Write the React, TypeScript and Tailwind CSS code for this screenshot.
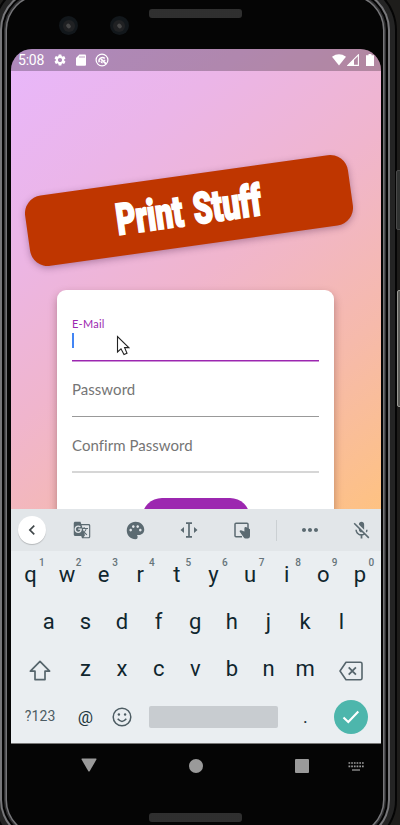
import React from "react";
import {
  MdSettings,
  MdGTranslate,
  MdPalette,
  MdMicOff,
  MdMoreHoriz,
  MdChevronLeft,
} from "react-icons/md";

const row1 = ["q", "w", "e", "r", "t", "y", "u", "i", "o", "p"];
const row2 = ["a", "s", "d", "f", "g", "h", "j", "k", "l"];
const row3 = ["z", "x", "c", "v", "b", "n", "m"];

function Speaker() {
  return (
    <div className="h-[9px] w-[93px] rounded-[3px] bg-[#181818] bg-[radial-gradient(#303030_0.7px,transparent_0.9px)] bg-[size:2px_2px]" />
  );
}

function Camera() {
  return (
    <div className="flex h-[19px] w-[19px] items-center justify-center rounded-full bg-[#12171b]">
      <div className="flex h-[12px] w-[12px] items-center justify-center rounded-full bg-[#202123]">
        <div className="h-[4px] w-[5px] rotate-45 rounded-full bg-[#484848]" />
      </div>
    </div>
  );
}

function StatusBar() {
  return (
    <div className="flex h-[22px] shrink-0 items-center bg-black/25 pl-[7px] pr-[7px] text-white">
      <span className="w-[35px] text-[14px] leading-[22px] tracking-[-0.2px]">5:08</span>
      <MdSettings className="h-[14px] w-[14px]" />
      <svg className="ml-[9px] h-[12px] w-[10px]" viewBox="0 0 10 12">
        <path d="M3.4 0.5H9Q10 .5 10 1.5V10.8Q10 11.8 9 11.8H1Q0 11.8 0 10.8V4Z" fill="currentColor" />
        <path d="M4 2v2M6 2v2M8 2v2" stroke="#ae87b5" strokeWidth=".8" />
      </svg>
      <svg className="ml-[9px] h-[14px] w-[14px]" viewBox="0 0 14 14" fill="none" stroke="currentColor">
        <circle cx="7" cy="7" r="5.9" strokeWidth="1.2" />
        <path d="M4.2 9.2A3.5 3.5 0 0 1 9.8 5.4" strokeWidth="1.5" />
        <path d="M6 6.2L11.3 11" strokeWidth="1.7" />
        <path d="M10.2 7Q9.8 7.6 8.6 7.3M7.6 9.9Q5.8 9.6 6 8" strokeWidth="1.1" />
      </svg>
      <div className="flex-1" />
      <svg className="h-[12px] w-[14px]" viewBox="0 0 14 12">
        <path d="M0 2.7Q7-2 14 2.7L7 11.5Z" fill="currentColor" />
      </svg>
      <svg className="ml-[1.5px] h-[12px] w-[12px]" viewBox="0 0 12 12">
        <path d="M11.4 .8V11.4H.8Z" fill="none" stroke="currentColor" strokeWidth="1.1" />
        <path d="M7 5V11.4H1Z" fill="currentColor" />
      </svg>
      <svg className="ml-[7px] h-[12px] w-[8px]" viewBox="0 0 8 12">
        <path d="M2.5 0H5.5V1.2H8V12H0V1.2H2.5Z" fill="currentColor" />
      </svg>
    </div>
  );
}

function Key({ label }: { label: string }) {
  return (
    <div className="flex w-[36.6px] shrink-0 items-center justify-center text-[22px] leading-none text-[#10262e]">
      {label}
    </div>
  );
}

function Keyboard() {
  return (
    <div className="flex h-[234px] shrink-0 flex-col bg-[#eaeef1]">
      <div className="flex h-[42px] shrink-0 items-center bg-[#e2e6e9] text-[#5b6a71]">
        <div className="flex w-[44.5px] justify-center pr-[2px]">
          <div className="flex h-[28px] w-[28px] items-center justify-center rounded-full bg-white text-[#40474a] shadow-[0_1px_1px_rgba(0,0,0,0.2)]">
            <MdChevronLeft className="h-[20px] w-[20px]" />
          </div>
        </div>
        <div className="flex w-[53.5px] justify-center">
          <MdGTranslate className="h-[18px] w-[18px]" />
        </div>
        <div className="flex w-[53.5px] justify-center">
          <MdPalette className="h-[21px] w-[21px]" />
        </div>
        <div className="flex w-[53.5px] justify-center">
          <svg className="h-[16px] w-[18px]" viewBox="0 0 18 16">
            <path d="M6 1.2H12M6 14.8H12M9 1V15" fill="none" stroke="currentColor" strokeWidth="1.7" />
            <path d="M4 5V11L.5 8ZM14 5V11L17.5 8Z" fill="currentColor" />
          </svg>
        </div>
        <div className="flex w-[53.5px] justify-center">
          <svg className="h-[17px] w-[17px]" viewBox="0 0 17 17">
            <path d="M8 14.7H2Q1 14.7 1 13.7V2.3Q1 1.3 2 1.3H13Q14 1.3 14 2.3V7" fill="none" stroke="currentColor" strokeWidth="1.5" />
            <path d="M5.6 9.6Q5.6 8.2 7 8.3L10.4 9.4V6Q10.6 4.8 12 5L16 7.2V14.2Q15.8 16.4 13.8 16.4H11.6Q10.4 16.4 9.6 15.2Z" fill="currentColor" />
          </svg>
        </div>
        <div className="ml-[6.5px] h-[21px] w-px bg-[#cbd0d3]" />
        <div className="flex w-[66px] justify-center">
          <MdMoreHoriz className="h-[24px] w-[24px]" />
        </div>
        <div className="flex w-[37px] justify-center">
          <MdMicOff className="h-[21px] w-[21px]" />
        </div>
      </div>
      <div className="flex h-[47.3px] pl-[1.2px]">
        {row1.map((k, i) => (
          <div key={k} className="relative flex">
            <Key label={k} />
            <span className="absolute right-[4px] top-[7px] text-[10px] font-medium leading-[10px] text-[#66747a]">{(i + 1) % 10}</span>
          </div>
        ))}
      </div>
      <div className="flex h-[47.3px] pl-[19.5px]">
        {row2.map((k) => (
          <Key key={k} label={k} />
        ))}
      </div>
      <div className="flex h-[47.3px]">
        <div className="flex w-[56.2px] items-center justify-center pl-[1px] pt-[2px] text-[#56656c]">
          <svg className="h-[21px] w-[22px]" viewBox="0 0 22 21">
            <path d="M11 1.3L20.6 11.2H16V19.6H6V11.2H1.4Z" fill="none" stroke="currentColor" strokeWidth="1.7" strokeLinejoin="round" />
          </svg>
        </div>
        {row3.map((k) => (
          <Key key={k} label={k} />
        ))}
        <div className="flex flex-1 items-center justify-center pr-[2px] pt-[3px] text-[#56656c]">
          <svg className="h-[20px] w-[24px]" viewBox="0 0 24 20" fill="none" stroke="currentColor" strokeWidth="1.6">
            <path d="M7 1.2H21.4Q23 1.2 23 2.8V17.2Q23 18.8 21.4 18.8H7L1 10Z" strokeLinejoin="round" />
            <path d="M9.7 6.4L16.9 13.6M16.9 6.4L9.7 13.6" strokeWidth="1.8" />
          </svg>
        </div>
      </div>
      <div className="flex h-[47.3px] items-center">
        <div className="w-[56.2px] pl-[2px] text-center text-[14px] tracking-[0.1px] text-[#4d5c63]">?123</div>
        <div className="w-[36.6px] pt-[2px] text-center text-[17px] text-[#22353c]">@</div>
        <div className="flex w-[36.6px] justify-center text-[#4d5c63]">
          <svg className="h-[20px] w-[20px]" viewBox="0 0 20 20" fill="none" stroke="currentColor" strokeWidth="1.5">
            <circle cx="10" cy="10" r="8.8" />
            <path d="M5.7 11.8Q10 17 14.3 11.8" />
            <circle cx="6.9" cy="7.5" r="1.2" fill="currentColor" stroke="none" />
            <circle cx="13.1" cy="7.5" r="1.2" fill="currentColor" stroke="none" />
          </svg>
        </div>
        <div className="ml-[8.6px] h-[22px] w-[129px] rounded-[2px] bg-[#c8ccd0]" />
        <div className="ml-[9px] w-[36.6px] text-center text-[18px] text-[#22353c]">.</div>
        <div className="flex flex-1 justify-center pr-[2px]">
          <div className="flex h-[34px] w-[34px] items-center justify-center rounded-full bg-[#4db6ac]">
            <svg className="h-[14px] w-[18px]" viewBox="0 0 18 14">
              <path d="M1.5 7.5L6.3 12L16.3 1.5" fill="none" stroke="white" strokeWidth="2.1" />
            </svg>
          </div>
        </div>
      </div>
    </div>
  );
}

function NavBar() {
  return (
    <div className="flex h-[45px] w-[370px] shrink-0 items-center border-t border-[#777] text-[#9a9a9a]">
      <svg className="-mt-[2px] ml-[70px] h-[14px] w-[16px]" viewBox="0 0 16 14">
        <path d="M1 .5H15Q16 .5 15.4 1.6L8.8 13Q8 14 7.2 13L.6 1.6Q0 .5 1 .5Z" fill="currentColor" />
      </svg>
      <div className="ml-[91.5px] h-[14px] w-[14px] rounded-full bg-[#9a9a9a]" />
      <div className="ml-[92.5px] h-[14px] w-[14px] rounded-[1px] bg-[#9a9a9a]" />
      <svg className="ml-[38.5px] h-[9px] w-[16px]" viewBox="0 0 16 9">
        <path d="M.5 1H16M.5 4.4H16" stroke="currentColor" strokeWidth="1.6" strokeDasharray="1.7 1" />
        <path d="M4 8H12" stroke="currentColor" strokeWidth="1.3" />
      </svg>
    </div>
  );
}

function SignUpScreen() {
  return (
    <div className="flex h-[438px] shrink-0 flex-col overflow-hidden">
      <div className="ml-[15px] mt-[104px] flex h-[71px] w-[326px] shrink-0 -rotate-[8deg] items-center justify-center rounded-[18px] bg-[#bf3600] shadow-[0_2px_7px_rgba(60,20,60,0.35)]">
        <span className="scale-x-[0.7] whitespace-nowrap text-[43.5px] font-black leading-none text-white [-webkit-text-stroke:1.8px_white] [word-spacing:4px]">
          Print Stuff
        </span>
      </div>
      <div className="ml-[46px] mt-[44px] flex h-[300px] w-[277px] shrink-0 flex-col rounded-[9px] bg-white px-[15px] font-['Lato',sans-serif] shadow-[0_4px_9px_rgba(80,30,30,0.38)]">
        <div className="flex h-[71px] shrink-0 flex-col border-b border-[#9c27b0] pt-[26px] shadow-[0_1px_0_rgba(156,39,176,0.5)]">
          <span className="text-[11px] leading-[16px] tracking-[0.25px] text-[#9c27b0]">E-Mail</span>
          <div className="mt-px h-[15px] w-[2px] bg-[#4285f4]" />
        </div>
        <div className="flex h-[56px] shrink-0 items-center border-b border-[#999] pt-[2px] text-[15px] tracking-[0.04px] text-[#757575]">Password</div>
        <div className="flex h-[56px] shrink-0 items-center border-b-2 border-[#d6d6d6] pt-[3px] text-[15px] tracking-[0.04px] text-[#757575] [font-variant-ligatures:common-ligatures]">Confirm Password</div>
        <div className="mt-[25px] h-[50px] w-[108px] shrink-0 self-center rounded-[20px] bg-[#9c27b0]" />
      </div>
    </div>
  );
}

export default function App() {
  return (
    <div className="relative h-[825px] w-[400px] overflow-hidden bg-[#1e1d1b] font-['Roboto',sans-serif]">
      <div className="absolute left-[396px] top-[170px] h-[60px] w-[6px] rounded-[2px] border border-[#4a4a4a] bg-[#303231]" />
      <div className="absolute left-[397px] top-[290px] h-[117px] w-[6px] rounded-[2px] border border-[#9a9a94] bg-[#5a5a56]" />
      <div className="-mt-[4px] ml-[7px] flex h-[838px] w-[375.5px] flex-col items-start rounded-[34px] bg-[#050505] pl-[4px] shadow-[0_0_0_1.5px_#77777a,0_0_0_3px_#303032,0_0_0_5px_#030303,0_0_0_7px_#77777a,0_0_0_12px_#242424,0_0_0_14px_#050505]">
        <div className="flex h-[53px] w-[370px] shrink-0">
          <div className="ml-[48px] mt-[20px] flex gap-[31.5px]">
            <Camera />
            <Camera />
          </div>
          <div className="ml-[20.5px] mt-[13px]">
            <Speaker />
          </div>
        </div>
        <div className="flex h-[694px] w-[370px] shrink-0 flex-col overflow-hidden rounded-t-[21px] bg-[linear-gradient(141.2deg,#e8b7fc_0%,#ebb5e8_25%,#f0b5cd_50%,#f6baab_75%,#fec282_100%)] bg-[size:100%_460px] bg-no-repeat">
          <StatusBar />
          <SignUpScreen />
          <Keyboard />
        </div>
        <NavBar />
        <div className="ml-[138px] mt-[25px]">
          <Speaker />
        </div>
      </div>
      <svg className="absolute left-[116px] top-[335px] h-[21px] w-[14px]" viewBox="0 0 14 21">
        <path d="M1.5 1.5V17L5 13.8L8 19.6L11 18.3L8.6 12.6H12.8Z" fill="white" stroke="#222" strokeWidth="1.1" />
      </svg>
    </div>
  );
}
